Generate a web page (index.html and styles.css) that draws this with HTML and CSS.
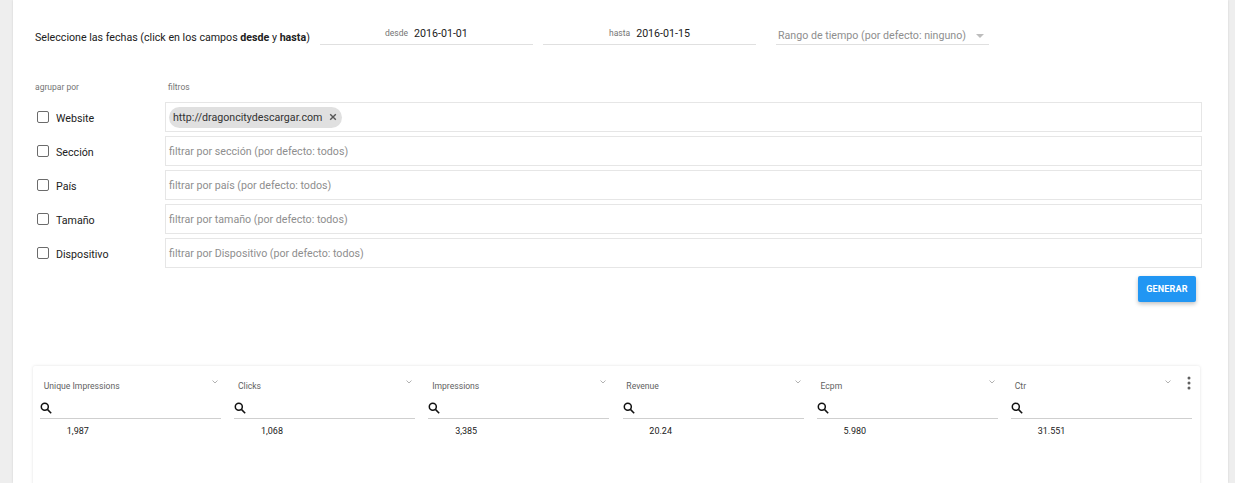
FILE: index.html
```html
<!DOCTYPE html>
<html lang="es">
<head>
<meta charset="utf-8">
<title>Reporte</title>
<link rel="stylesheet" href="styles.css">
</head>
<body>
<main class="page">
  <section class="dates">
    <p class="dates-text">Seleccione las fechas (click en los campos <b>desde</b> y <b>hasta</b>)</p>
    <div class="date-field date-from"><span class="date-label">desde</span><span class="date-value">2016-01-01</span></div>
    <div class="date-field date-to"><span class="date-label">hasta</span><span class="date-value">2016-01-15</span></div>
    <div class="range"><span>Rango de tiempo (por defecto: ninguno)</span><i class="range-arrow"></i></div>
  </section>
  <div class="heads"><span class="head-group">agrupar por</span><span>filtros</span></div>
  <section class="filters">
    <div class="filter-row">
      <label class="check"><i class="box"></i><span>Website</span></label>
      <div class="filter-input"><span class="chip">http://dragoncitydescargar.com<svg class="chip-x" viewBox="0 0 8 8" width="8" height="8"><path d="M1.2 1.2l5.6 5.6M6.8 1.2L1.2 6.8"/></svg></span></div>
    </div>
    <div class="filter-row">
      <label class="check"><i class="box"></i><span>Sección</span></label>
      <div class="filter-input">filtrar por sección (por defecto: todos)</div>
    </div>
    <div class="filter-row">
      <label class="check"><i class="box"></i><span>País</span></label>
      <div class="filter-input">filtrar por país (por defecto: todos)</div>
    </div>
    <div class="filter-row">
      <label class="check"><i class="box"></i><span>Tamaño</span></label>
      <div class="filter-input">filtrar por tamaño (por defecto: todos)</div>
    </div>
    <div class="filter-row">
      <label class="check"><i class="box"></i><span>Dispositivo</span></label>
      <div class="filter-input">filtrar por Dispositivo (por defecto: todos)</div>
    </div>
  </section>
  <div class="actions"><button class="generate">GENERAR</button></div>
  <section class="grid-card">
    <div class="col">
      <div class="col-head"><span>Unique Impressions</span><svg class="chev" viewBox="0 0 6 4" width="6" height="4"><path d="M.5.5l2.5 2.5L5.5.5"/></svg></div>
      <div class="search"><svg class="mag" viewBox="0 0 12 12" width="12" height="12"><circle cx="4.8" cy="4.8" r="3.5"/><path d="M7.4 7.4l3.8 3.8"/></svg></div>
      <div class="cell">1,987</div>
    </div>
    <div class="col">
      <div class="col-head"><span>Clicks</span><svg class="chev" viewBox="0 0 6 4" width="6" height="4"><path d="M.5.5l2.5 2.5L5.5.5"/></svg></div>
      <div class="search"><svg class="mag" viewBox="0 0 12 12" width="12" height="12"><circle cx="4.8" cy="4.8" r="3.5"/><path d="M7.4 7.4l3.8 3.8"/></svg></div>
      <div class="cell">1,068</div>
    </div>
    <div class="col">
      <div class="col-head"><span>Impressions</span><svg class="chev" viewBox="0 0 6 4" width="6" height="4"><path d="M.5.5l2.5 2.5L5.5.5"/></svg></div>
      <div class="search"><svg class="mag" viewBox="0 0 12 12" width="12" height="12"><circle cx="4.8" cy="4.8" r="3.5"/><path d="M7.4 7.4l3.8 3.8"/></svg></div>
      <div class="cell">3,385</div>
    </div>
    <div class="col">
      <div class="col-head"><span>Revenue</span><svg class="chev" viewBox="0 0 6 4" width="6" height="4"><path d="M.5.5l2.5 2.5L5.5.5"/></svg></div>
      <div class="search"><svg class="mag" viewBox="0 0 12 12" width="12" height="12"><circle cx="4.8" cy="4.8" r="3.5"/><path d="M7.4 7.4l3.8 3.8"/></svg></div>
      <div class="cell">20.24</div>
    </div>
    <div class="col">
      <div class="col-head"><span>Ecpm</span><svg class="chev" viewBox="0 0 6 4" width="6" height="4"><path d="M.5.5l2.5 2.5L5.5.5"/></svg></div>
      <div class="search"><svg class="mag" viewBox="0 0 12 12" width="12" height="12"><circle cx="4.8" cy="4.8" r="3.5"/><path d="M7.4 7.4l3.8 3.8"/></svg></div>
      <div class="cell">5.980</div>
    </div>
    <div class="col col-last">
      <div class="col-head"><span>Ctr</span><svg class="chev" viewBox="0 0 6 4" width="6" height="4"><path d="M.5.5l2.5 2.5L5.5.5"/></svg></div>
      <div class="search"><svg class="mag" viewBox="0 0 12 12" width="12" height="12"><circle cx="4.8" cy="4.8" r="3.5"/><path d="M7.4 7.4l3.8 3.8"/></svg></div>
      <div class="cell">31.551</div>
    </div>
    <svg class="kebab" viewBox="0 0 4 14" width="4" height="14"><circle cx="2" cy="2" r="1.5"/><circle cx="2" cy="7" r="1.5"/><circle cx="2" cy="12" r="1.5"/></svg>
  </section>
</main>
</body>
</html>
```
FILE: styles.css
```css
* { box-sizing: border-box; }
html, body { margin: 0; height: 483px; overflow: hidden; }
body { background: #eeeeee; font-family: Roboto, "Liberation Sans", sans-serif; color: #212121; }
.page {
  width: 1215px;
  height: 483px;
  margin-left: 13px;
  background: #fff;
  box-shadow: 0 0 2px rgba(0,0,0,.12);
  overflow: hidden;
  padding: 0 26px 0 22px;
}
.dates { display: flex; align-items: flex-end; height: 45px; }
.dates-text { margin: 0 11px 0 0; width: 274px; font-size: 10.67px; line-height: 14px; white-space: nowrap; height: 14px; }
.date-field {
  width: 213px;
  height: 22px;
  border-bottom: 1px solid #e0e0e0;
  display: flex;
  align-items: center;
  margin-right: 10px;
  padding-bottom: 1px;
  white-space: nowrap;
}
.date-from { padding-left: 65px; }
.date-to { padding-left: 66px; }
.date-label { font-size: 8.53px; color: #757575; margin-right: 6px; }
.date-value { font-size: 10.67px; color: #212121; }
.range {
  width: 213px;
  height: 22px;
  border-bottom: 1px solid #e0e0e0;
  margin-left: 10px;
  display: flex;
  align-items: center;
  padding: 4px 0 0 2px;
  font-size: 10.67px;
  color: #8e8e8e;
  white-space: nowrap;
}
.range-arrow { width: 0; height: 0; border: 4px solid transparent; border-top: 4px solid #bdbdbd; border-bottom: 0; margin-left: 10px; }
.heads { display: flex; margin-top: 36px; font-size: 8.53px; line-height: 12px; color: #757575; height: 12px; }
.head-group { width: 133px; }
.filters { margin-top: 9px; display: flex; flex-direction: column; gap: 4px; }
.filter-row { display: flex; height: 30px; align-items: stretch; }
.check { width: 130px; display: flex; align-items: center; font-size: 10.67px; padding-left: 2px; padding-top: 1px; color: #212121; }
.check span { margin-left: 7px; padding-top: 2px; }
.box { width: 12px; height: 12px; border: 1px solid #6b6b6b; border-radius: 2px; display: block; margin-bottom: 2px; background: #fff; }
.filter-input {
  width: 1037px;
  border: 1px solid #e6e6e6;
  display: flex;
  align-items: center;
  padding: 0 3px;
  font-size: 10.67px;
  color: #8e8e8e;
  white-space: nowrap;
}
.chip {
  height: 21px;
  background: #e0e0e0;
  border-radius: 11px;
  display: flex;
  align-items: center;
  color: #333;
  font-size: 10.67px;
  padding: 0 5px 0 4px;
}
.chip-x { margin-left: 7px; fill: none; stroke: #555; stroke-width: 1.4; }
.actions { display: flex; justify-content: flex-end; margin-top: 8px; padding-right: 6px; }
.generate {
  width: 58px;
  height: 26px;
  background: #2196f3;
  color: #fff;
  border: 0;
  border-radius: 2px;
  font: 700 9px Roboto, sans-serif;
  letter-spacing: .2px;
  box-shadow: 0 2px 4px rgba(0,0,0,.25);
  padding: 0;
}
.grid-card {
  position: relative;
  margin-top: 64px;
  margin-left: -2px;
  width: 1167px;
  height: 130px;
  background: #fff;
  border-radius: 2px;
  box-shadow: 0 0 3px rgba(0,0,0,.12);
  display: flex;
  gap: 13.2px;
  padding: 0 7px;
}
.col { width: 181px; flex: none; }
.col-head { height: 32px; position: relative; padding: 14px 0 0 3.8px; font-size: 8.6px; line-height: 12px; color: #616161; white-space: nowrap; }
.chev { position: absolute; right: 3px; top: 14px; fill: none; stroke: #9e9e9e; stroke-width: .8; }
.col-last .chev { right: 21px; }
.search { height: 21px; border-bottom: 1px solid #cfcfcf; padding-top: 4px; }
.mag { display: block; fill: none; stroke: #111; stroke-width: 1.5; }
.cell { margin-top: 6px; padding-left: 26.8px; font-size: 9px; line-height: 12px; color: #212121; }
.kebab { position: absolute; top: 10px; right: 9px; fill: #616161; }
```
